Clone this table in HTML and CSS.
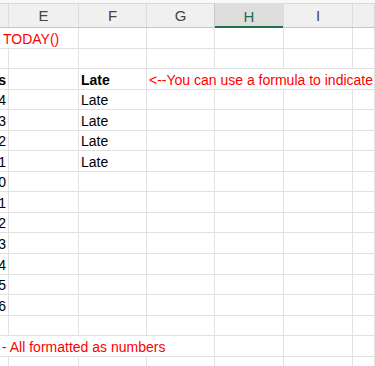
FILE: index.html
```html
<!DOCTYPE html>
<html lang="en">
<head>
  <meta charset="UTF-8">
  <title>Sheet</title>
  <link rel="stylesheet" href="styles.css">
</head>
<body>
  <div class="sheet">
    <div class="col-heads">
      <div class="ch"></div>
      <div class="ch">E</div>
      <div class="ch">F</div>
      <div class="ch">G</div>
      <div class="ch selected">H</div>
      <div class="ch">I</div>
      <div class="ch"></div>
    </div>

    <div class="grid">
      <!-- row 1 -->
      <div class="c span2 red pad3">TODAY()</div>
      <div class="c"></div><div class="c"></div><div class="c"></div><div class="c"></div><div class="c"></div>

      <!-- row 2 -->
      <div class="c"></div><div class="c"></div><div class="c"></div><div class="c"></div><div class="c"></div><div class="c"></div><div class="c"></div>

      <!-- row 3 -->
      <div class="c num bold">Days</div>
      <div class="c"></div>
      <div class="c bold">Late</div>
      <div class="c span4 red">&lt;--You can use a formula to indicate if a date is late</div>

      <!-- rows 4-7 -->
      <div class="c num">4</div><div class="c"></div><div class="c">Late</div><div class="c"></div><div class="c"></div><div class="c"></div><div class="c"></div>
      <div class="c num">3</div><div class="c"></div><div class="c">Late</div><div class="c"></div><div class="c"></div><div class="c"></div><div class="c"></div>
      <div class="c num">2</div><div class="c"></div><div class="c">Late</div><div class="c"></div><div class="c"></div><div class="c"></div><div class="c"></div>
      <div class="c num">1</div><div class="c"></div><div class="c">Late</div><div class="c"></div><div class="c"></div><div class="c"></div><div class="c"></div>

      <!-- rows 8-14 -->
      <div class="c num">0</div><div class="c"></div><div class="c"></div><div class="c"></div><div class="c"></div><div class="c"></div><div class="c"></div>
      <div class="c num">1</div><div class="c"></div><div class="c"></div><div class="c"></div><div class="c"></div><div class="c"></div><div class="c"></div>
      <div class="c num">2</div><div class="c"></div><div class="c"></div><div class="c"></div><div class="c"></div><div class="c"></div><div class="c"></div>
      <div class="c num">3</div><div class="c"></div><div class="c"></div><div class="c"></div><div class="c"></div><div class="c"></div><div class="c"></div>
      <div class="c num">4</div><div class="c"></div><div class="c"></div><div class="c"></div><div class="c"></div><div class="c"></div><div class="c"></div>
      <div class="c num">5</div><div class="c"></div><div class="c"></div><div class="c"></div><div class="c"></div><div class="c"></div><div class="c"></div>
      <div class="c num">6</div><div class="c"></div><div class="c"></div><div class="c"></div><div class="c"></div><div class="c"></div><div class="c"></div>

      <!-- row 15 -->
      <div class="c"></div><div class="c"></div><div class="c"></div><div class="c"></div><div class="c"></div><div class="c"></div><div class="c"></div>

      <!-- row 16 -->
      <div class="c span4 red pad2">- All formatted as numbers</div>
      <div class="c"></div><div class="c"></div><div class="c"></div>

      <!-- row 17 -->
      <div class="c"></div><div class="c"></div><div class="c"></div><div class="c"></div><div class="c"></div><div class="c"></div><div class="c"></div>
    </div>
  </div>
</body>
</html>
```

FILE: styles.css
```css
body {
  margin: 0;
  background-color: #fff;
  font-family: "Liberation Sans", Arial, sans-serif;
  overflow: hidden;
}

.sheet {
  width: 375px;
  height: 366px;
  overflow: hidden;
}

.col-heads,
.grid {
  display: grid;
  grid-template-columns: 9px 70px 68px 68px 69px 69px 1fr;
}

.col-heads {
  height: 28px;
  box-sizing: border-box;
  background-color: #f0f0f0;
  border-top: 3px solid #f8f8f8;
  box-shadow: inset 0 1px 0 #d8d8d8;
  border-bottom: 1px solid #c6c6c6;
}

.ch {
  box-sizing: border-box;
  border-right: 1px solid #dcdcdc;
  display: flex;
  align-items: center;
  justify-content: center;
  font-size: 15px;
  color: #444;
  padding-top: 1px;
}

.ch.selected {
  background-color: #dedede;
  color: #1f6e43;
  border-left: 1px solid #c8c8c8;
  margin-left: -1px;
  box-shadow: inset 0 -2px 0 #1e7145;
  margin-bottom: -1px;
}

.grid {
  grid-auto-rows: 20.55px;
}

.c {
  box-sizing: border-box;
  border-right: 1px solid #e1e1e1;
  border-bottom: 1px solid #e1e1e1;
  display: flex;
  align-items: flex-end;
  padding: 0 2px 1px 2px;
  font-size: 14px;
  line-height: 16px;
  color: #000;
  white-space: nowrap;
  overflow: hidden;
}

.num {
  justify-content: flex-end;
  padding-right: 2px;
}

.bold {
  font-weight: bold;
}

.red {
  color: #ff0000;
}

.span2 {
  grid-column: span 2;
}

.span4 {
  grid-column: span 4;
}

.pad3 {
  padding-left: 3px;
}

.pad2 {
  padding-left: 2px;
}
```
